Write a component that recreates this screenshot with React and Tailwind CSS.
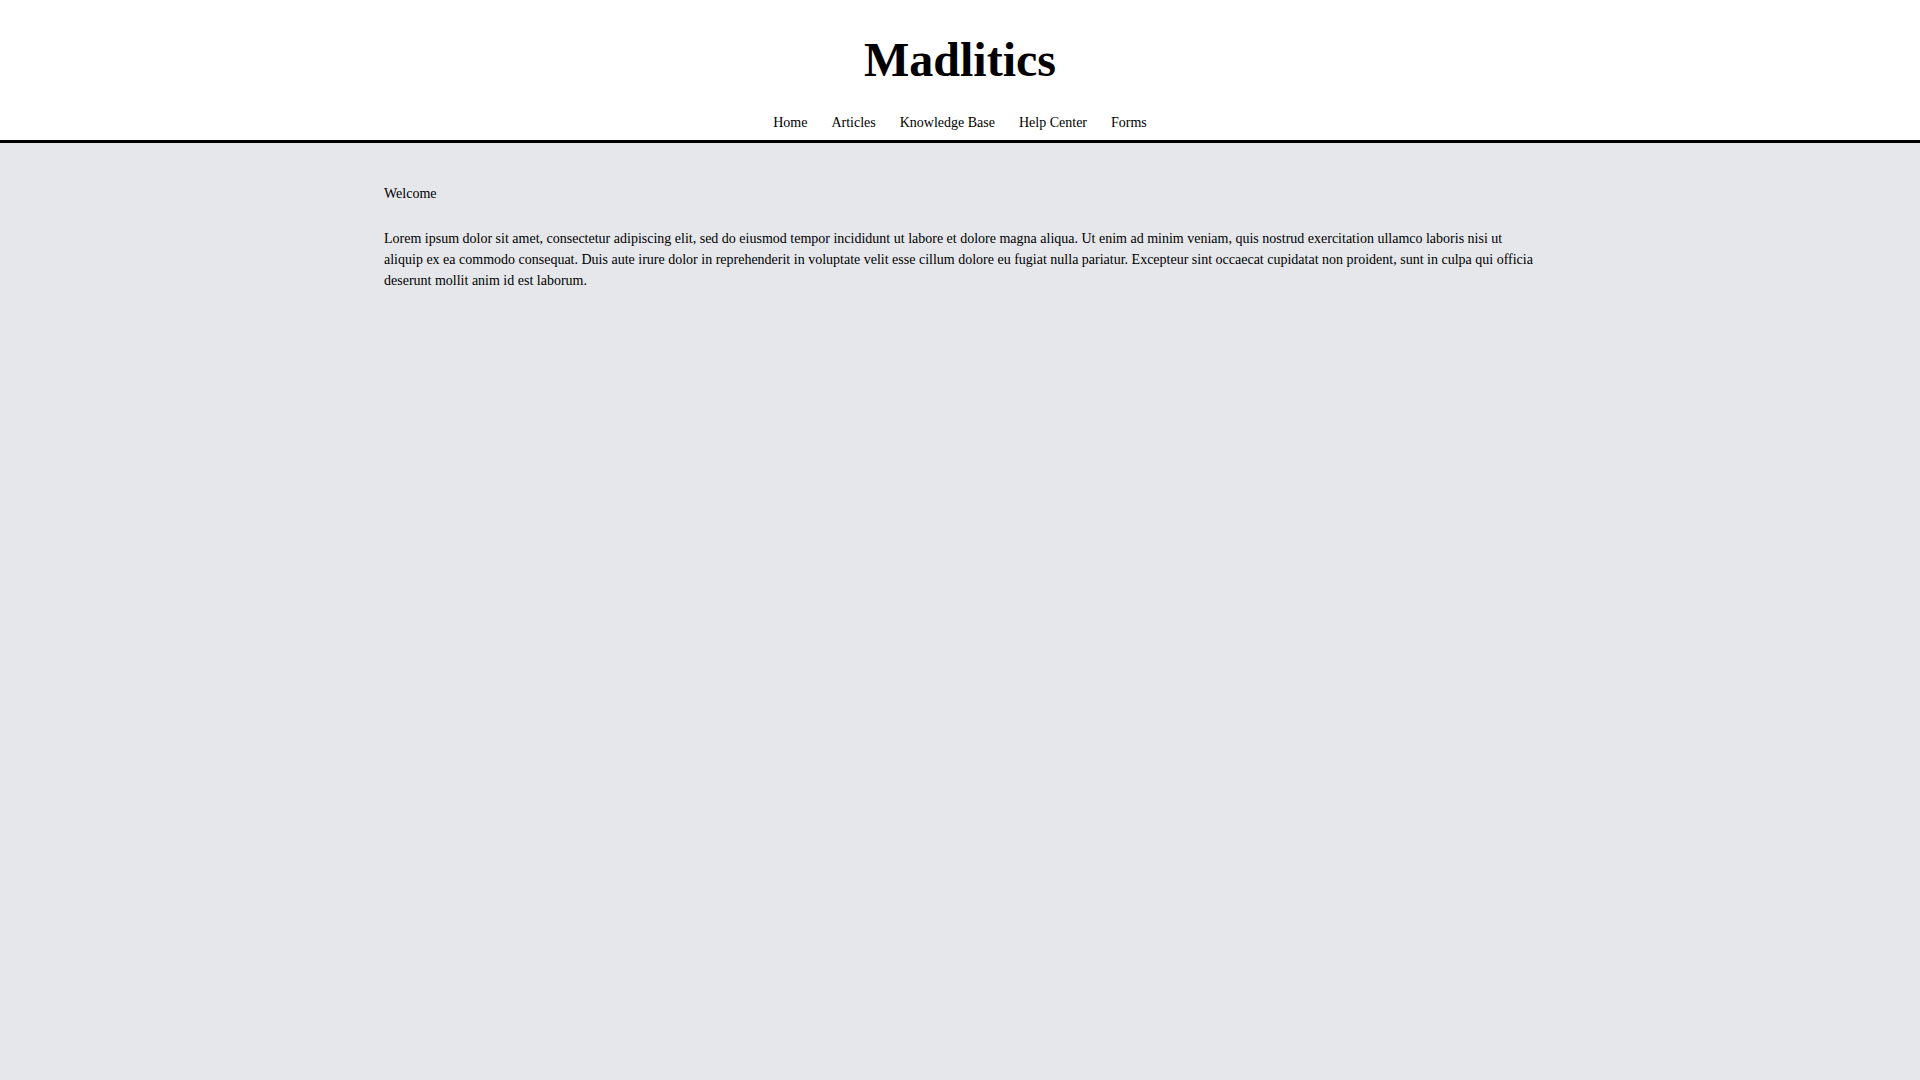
import React from "react";

const links = ["Home", "Articles", "Knowledge Base", "Help Center", "Forms"];

const App = () => {
  return (
    <div
      className="min-h-screen flex flex-col bg-gray-200 text-black"
      style={{ fontFamily: "'Liberation Serif', 'Times New Roman', serif" }}
    >
      {/* Header */}
      <header className="bg-white border-b-[3px] border-black pt-9 pb-[7px] flex flex-col items-center">
        <h1 className="text-5xl leading-none font-bold mb-7">Madlitics</h1>
        <nav className="flex gap-6 text-sm leading-normal">
          {links.map((link) => (
            <a key={link} href="#">
              {link}
            </a>
          ))}
        </nav>
      </header>

      {/* Content */}
      <main className="w-full max-w-6xl mx-auto pt-10 text-sm leading-normal">
        <p className="mb-6">Welcome</p>
        <p>
          Lorem ipsum dolor sit amet, consectetur adipiscing elit, sed do eiusmod tempor incididunt ut labore et
          dolore magna aliqua. Ut enim ad minim veniam, quis nostrud exercitation ullamco laboris nisi ut aliquip ex
          ea commodo consequat. Duis aute irure dolor in reprehenderit in voluptate velit esse cillum dolore eu
          fugiat nulla pariatur. Excepteur sint occaecat cupidatat non proident, sunt in culpa qui officia deserunt
          mollit anim id est laborum.
        </p>
      </main>
    </div>
  );
};

export default App;
